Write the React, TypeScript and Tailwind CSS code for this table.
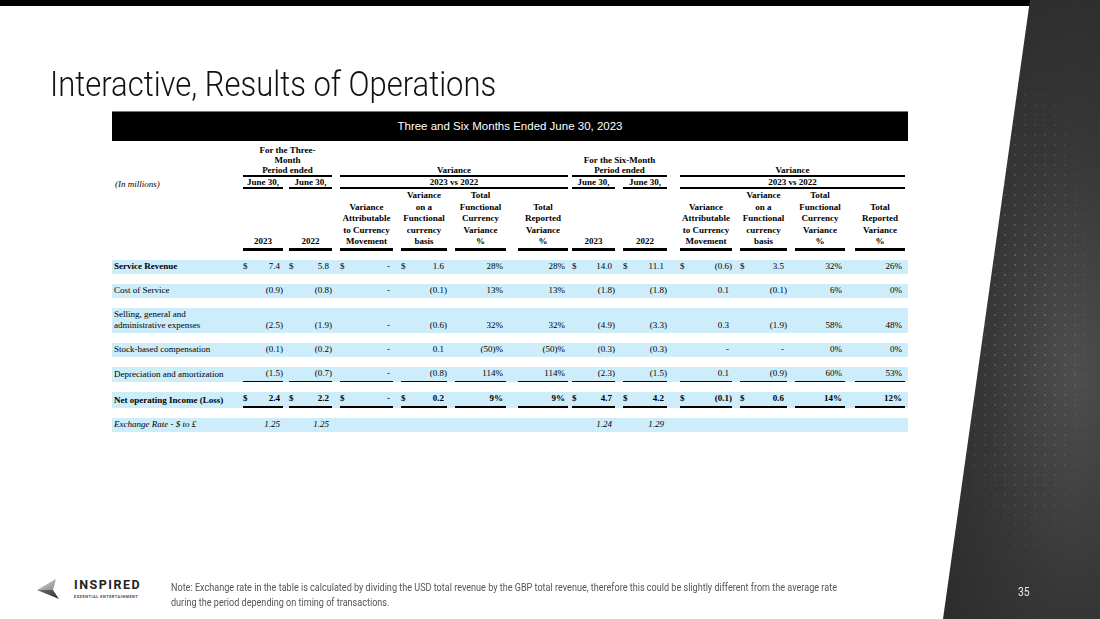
import clsx from "clsx";

// column grid: label + 12 figure columns (each includes its right-hand gap)
const GRID =
  "grid grid-cols-[131px_46px_51px_61px_54px_63px_54px_51px_57px_60px_55px_60px_53px]";

const PR = [
  "pr-[6px]",
  "pr-[8px]",
  "pr-[8px]",
  "pr-[8px]",
  "pr-[12px]",
  "pr-[4px]",
  "pr-[8px]",
  "pr-[13px]",
  "pr-[8px]",
  "pr-[8px]",
  "pr-[10px]",
  "pr-[3px]",
];

const DOLLAR_COLS = [0, 1, 2, 3, 6, 7, 8, 9];

const COL_HEADS = [
  "2023",
  "2022",
  "Variance\nAttributable\nto Currency\nMovement",
  "Variance\non a\nFunctional\ncurrency\nbasis",
  "Total\nFunctional\nCurrency\nVariance\n%",
  "Total\nReported\nVariance\n%",
];

type Row = {
  label: string;
  values: string[];
  boldLabel?: boolean;
  boldValues?: boolean;
  italic?: boolean;
  dollar?: boolean;
  line?: "single" | "double";
};

const ROWS: Row[] = [
  {
    label: "Service Revenue",
    boldLabel: true,
    dollar: true,
    values: ["7.4", "5.8", "-", "1.6", "28%", "28%", "14.0", "11.1", "(0.6)", "3.5", "32%", "26%"],
  },
  {
    label: "Cost of Service",
    values: ["(0.9)", "(0.8)", "-", "(0.1)", "13%", "13%", "(1.8)", "(1.8)", "0.1", "(0.1)", "6%", "0%"],
  },
  {
    label: "Selling, general and\nadministrative expenses",
    values: ["(2.5)", "(1.9)", "-", "(0.6)", "32%", "32%", "(4.9)", "(3.3)", "0.3", "(1.9)", "58%", "48%"],
  },
  {
    label: "Stock-based compensation",
    values: ["(0.1)", "(0.2)", "-", "0.1", "(50)%", "(50)%", "(0.3)", "(0.3)", "-", "-", "0%", "0%"],
  },
  {
    label: "Depreciation and amortization",
    line: "single",
    values: ["(1.5)", "(0.7)", "-", "(0.8)", "114%", "114%", "(2.3)", "(1.5)", "0.1", "(0.9)", "60%", "53%"],
  },
  {
    label: "Net operating Income (Loss)",
    boldLabel: true,
    boldValues: true,
    dollar: true,
    line: "double",
    values: ["2.4", "2.2", "-", "0.2", "9%", "9%", "4.7", "4.2", "(0.1)", "0.6", "14%", "12%"],
  },
  {
    label: "Exchange Rate - $ to £",
    italic: true,
    values: ["1.25", "1.25", "", "", "", "", "1.24", "1.29", "", "", "", ""],
  },
];

function DataRow({ row }: { row: Row }) {
  return (
    <div className={clsx(GRID, "items-end bg-[#cdedfb] mt-[10px] first:mt-0", row.italic && "italic")}>
      <div
        className={clsx(
          "pl-[2px] leading-[11px] py-[1.5px] whitespace-pre-line",
          row.boldLabel && "font-bold"
        )}
      >
        {row.label}
      </div>
      {row.values.map((v, i) => (
        <div key={i} className={PR[i]}>
          <div
            className={clsx(
              "flex justify-between leading-[11px] py-[1.5px]",
              row.boldValues && "font-bold",
              v && row.line === "single" && "border-b border-black",
              v && row.line === "double" && "border-b-2 border-black"
            )}
          >
            <span>{row.dollar && DOLLAR_COLS.includes(i) ? "$" : ""}</span>
            <span className={v.endsWith(")") ? "" : "pr-[3px]"}>{v}</span>
          </div>
        </div>
      ))}
    </div>
  );
}

function Table() {
  const heads = [...COL_HEADS, ...COL_HEADS];
  return (
    <div className="w-[796px] font-['Liberation_Serif',serif] text-[9px] text-black">
      <div className="h-[30px] bg-black flex items-center justify-center font-['Liberation_Sans',sans-serif] text-[11.5px] text-white border-t border-[#777]">
        Three and Six Months Ended June 30, 2023
      </div>

      {/* group heads */}
      <div className={clsx(GRID, "items-end font-bold mt-[4px]")}>
        <div />
        <div className="col-span-2 pr-[8px]">
          <div className="text-center leading-[10px] border-b-2 border-black whitespace-pre-line">
            {"For the Three-\nMonth\nPeriod ended"}
          </div>
        </div>
        <div className="col-span-4 pr-[4px]">
          <div className="text-center leading-[10px] border-b-2 border-black">Variance</div>
        </div>
        <div className="col-span-2 pr-[13px]">
          <div className="text-center leading-[10px] border-b-2 border-black whitespace-pre-line">
            {"For the Six-Month\nPeriod ended"}
          </div>
        </div>
        <div className="col-span-4 pr-[3px]">
          <div className="text-center leading-[10px] border-b-2 border-black">Variance</div>
        </div>
      </div>

      <div className={clsx(GRID, "items-end font-bold")}>
        <div className="pl-[3px] leading-[10px] italic font-normal">(In millions)</div>
        <div className={PR[0]}>
          <div className="text-center leading-[10px] border-b-2 border-black">June 30,</div>
        </div>
        <div className={PR[1]}>
          <div className="text-center leading-[10px] border-b-2 border-black">June 30,</div>
        </div>
        <div className="col-span-4 pr-[4px]">
          <div className="text-center leading-[10px] border-b-2 border-black">2023 vs 2022</div>
        </div>
        <div className={PR[6]}>
          <div className="text-center leading-[10px] border-b-2 border-black">June 30,</div>
        </div>
        <div className={PR[7]}>
          <div className="text-center leading-[10px] border-b-2 border-black">June 30,</div>
        </div>
        <div className="col-span-4 pr-[3px]">
          <div className="text-center leading-[10px] border-b-2 border-black">2023 vs 2022</div>
        </div>
      </div>

      {/* column heads */}
      <div className={clsx(GRID, "items-end font-bold pt-[1px]")}>
        <div />
        {heads.map((h, i) => (
          <div key={i} className={PR[i]}>
            <div className="text-center leading-[11.5px] border-b-[3px] border-black whitespace-pre-line">
              {h}
            </div>
          </div>
        ))}
      </div>

      <div className="mt-[9px] flex flex-col">
        {ROWS.map((r) => (
          <DataRow key={r.label} row={r} />
        ))}
      </div>
    </div>
  );
}

function Logo() {
  return (
    <div className="flex items-center gap-[11px]">
      <svg width="26" height="22" viewBox="0 0 26 22">
        <defs>
          <linearGradient id="lgA" x1="0" y1="0" x2="1" y2="1">
            <stop offset="0" stopColor="#d9d9d9" />
            <stop offset="1" stopColor="#8a8a8a" />
          </linearGradient>
          <linearGradient id="lgB" x1="0" y1="0" x2="1" y2="1">
            <stop offset="0" stopColor="#6a6a6a" />
            <stop offset="1" stopColor="#2e2e2e" />
          </linearGradient>
        </defs>
        <polygon points="0,12 19,1 16,12" fill="url(#lgA)" />
        <polygon points="0,12 16,12 22,21" fill="url(#lgB)" />
      </svg>
      <div className="flex flex-col items-start font-['Roboto',sans-serif] text-[#222]">
        <span className="text-[12.5px] font-bold leading-none tracking-[0.12em]">INSPIRED</span>
        <span className="mt-[4px] text-[3.8px] font-bold leading-none tracking-[0.15em] text-[#444]">
          ESSENTIAL ENTERTAINMENT
        </span>
      </div>
    </div>
  );
}

export default function App() {
  return (
    <div className="w-[1100px] h-[619px] overflow-hidden bg-white flex flex-col">
      <div className="h-[6px] bg-black shrink-0" />
      <div className="flex flex-1 min-h-0">
        <div className="w-[930px] flex flex-col">
          <div className="pl-[50px] pt-[61px]">
            <h1 className="inline-block origin-left scale-x-[0.885] whitespace-nowrap font-['Roboto',sans-serif] font-light text-[35px] leading-none text-[#111]">
              Interactive, Results of Operations
            </h1>
          </div>
          <div className="pl-[112px] mt-[9px]">
            <Table />
          </div>
          <div className="flex-1" />
          <div className="h-[41px] flex items-start pl-[37px]">
            <Logo />
            <p className="ml-[30px] pt-[2px] origin-left scale-x-[0.825] whitespace-nowrap font-['Roboto',sans-serif] text-[11px] leading-[15px] text-[#555]">
              Note: Exchange rate in the table is calculated by dividing the USD total revenue by the GBP total
              revenue, therefore this could be slightly different from the average rate
              <br />
              during the period depending on timing of transactions.
            </p>
          </div>
        </div>
        <div className="relative flex-1 -mt-[6px] [clip-path:polygon(100px_0,100%_0,100%_100%,13px_100%)] bg-[radial-gradient(ellipse_at_85%_60%,#4e4e4e_0%,#363636_45%,#262626_100%)] flex flex-col justify-end">
          <div className="absolute inset-0 bg-[radial-gradient(circle,rgba(255,255,255,0.16)_1px,transparent_1.6px)] bg-[length:10px_10px] [mask-image:radial-gradient(ellipse_at_55%_50%,black_15%,transparent_65%)]" />
          <div className="relative pl-[88px] pb-[17px]">
            <span className="inline-block origin-left scale-x-[0.8] font-['Roboto',sans-serif] text-[13px] leading-none text-[#e5e5e5]">
              35
            </span>
          </div>
        </div>
      </div>
    </div>
  );
}
